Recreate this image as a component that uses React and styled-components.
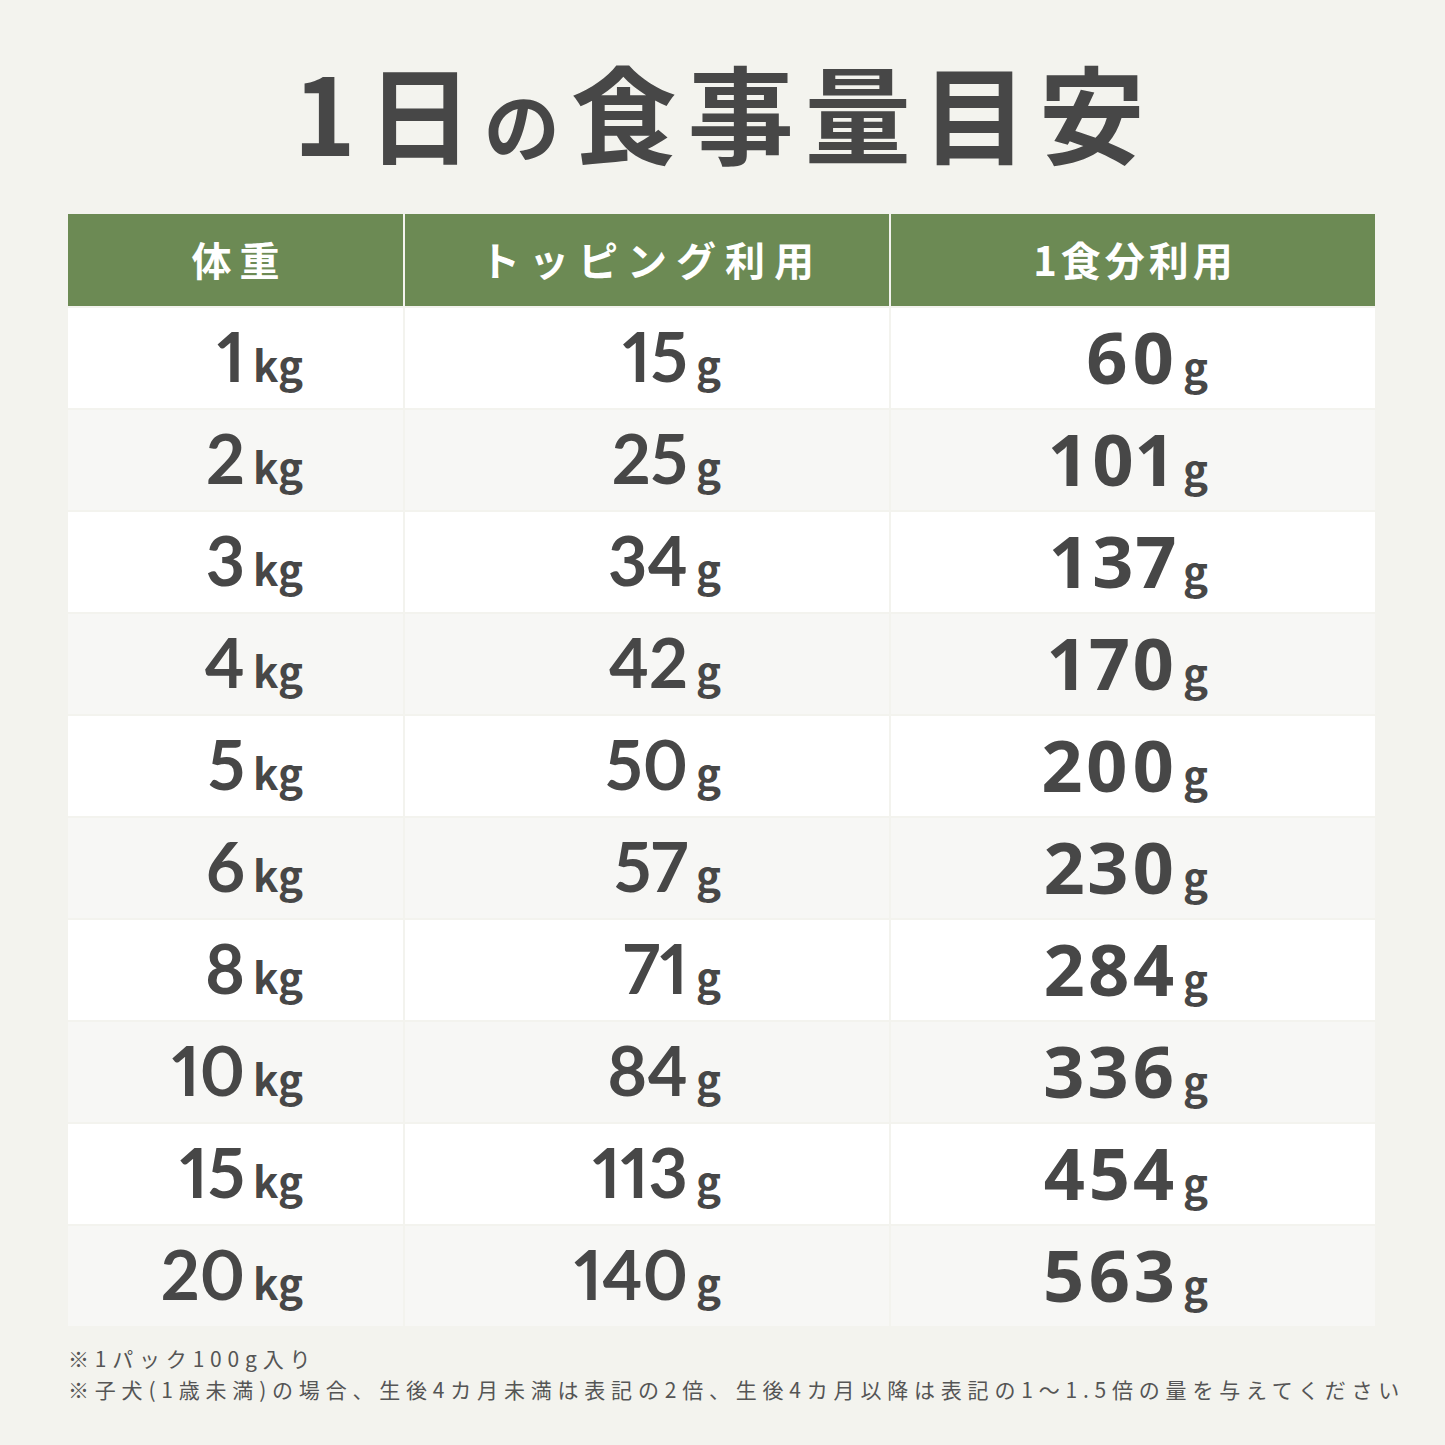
import React from "react";
import styled, { createGlobalStyle } from "styled-components";

const rows = [
  ["1", "15", "60"],
  ["2", "25", "101"],
  ["3", "34", "137"],
  ["4", "42", "170"],
  ["5", "50", "200"],
  ["6", "57", "230"],
  ["8", "71", "284"],
  ["10", "84", "336"],
  ["15", "113", "454"],
  ["20", "140", "563"],
];

const GlobalStyle = createGlobalStyle`
  body {
    margin: 0;
    background: #f3f3ee;
    font-family: "Noto Sans CJK JP", "Noto Sans", sans-serif;
  }
`;

const Page = styled.div`
  width: 1445px;
  min-height: 1445px;
  padding-top: 57px;
  box-sizing: border-box;
  background: #f3f3ee;
  color: #484848;
`;

const Title = styled.h1`
  margin: 0;
  padding-left: 4px;
  text-align: center;
  font-size: 106px;
  line-height: 1;
  font-weight: 700;
  letter-spacing: 11px;
  color: #474747;

  span {
    font-size: 76px;
  }
`;

const Table = styled.div`
  margin: 51px 0 0 68px;
  width: 1307px;
  display: grid;
  grid-template-columns: 335px 484px 484px;
  grid-template-rows: 92px repeat(10, 100px);
  gap: 2px;
`;

const HeadCell = styled.div`
  background: #6c8a54;
  color: #ffffff;
  display: flex;
  align-items: center;
  justify-content: center;
  font-size: 40px;
  font-weight: 700;
  letter-spacing: ${(p) => p.$ls}px;
  padding-left: ${(p) => p.$ls}px;
  padding-bottom: 2px;
`;

const Cell = styled.div`
  background: ${(p) => (p.$alt ? "#f7f7f5" : "#ffffff")};
  display: flex;
  align-items: center;
  justify-content: flex-end;
  padding-right: ${(p) => p.$pr}px;
  padding-bottom: 5px;
  box-sizing: border-box;
`;

const Value = styled.div`
  display: flex;
  align-items: baseline;
  line-height: 1;
  font-weight: 700;
  color: #474747;
`;

/* weight and topping columns use a narrow proportional face,
   the full-meal column a rounder, wider one */
const Num = styled.span`
  font-family: ${(p) =>
    p.$wide ? `"Noto Sans", sans-serif` : `"Lato", sans-serif`};
  font-size: ${(p) => (p.$wide ? 72 : 68)}px;
  letter-spacing: ${(p) => (p.$wide ? 3 : 0)}px;
  font-feature-settings: "pnum" 1;
`;

const Unit = styled.span`
  font-size: 42px;
  margin-left: ${(p) => (p.$wide ? 5 : 8)}px;
`;

const Notes = styled.div`
  margin: 17px 0 0 68px;
  font-size: 21px;
  line-height: 31px;
  letter-spacing: 5.8px;
  color: #555555;
`;

const headers = [
  ["体重", 8],
  ["トッピング利用", 9],
  ["1食分利用", 4],
];

const pads = [100, 168, 167];

export default function App() {
  return (
    <Page>
      <GlobalStyle />
      <Title>
        1日<span>の</span>食事量目安
      </Title>
      <Table>
        {headers.map(([label, ls]) => (
          <HeadCell key={label} $ls={ls}>
            {label}
          </HeadCell>
        ))}
        {rows.map((row, i) =>
          row.map((v, j) => (
            <Cell key={`${i}-${j}`} $alt={i % 2 === 1} $pr={pads[j]}>
              <Value>
                <Num $wide={j === 2}>{v}</Num>
                <Unit $wide={j === 2}>{j === 0 ? "kg" : "g"}</Unit>
              </Value>
            </Cell>
          ))
        )}
      </Table>
      <Notes>
        <div>※1パック100g入り</div>
        <div>
          ※子犬(1歳未満)の場合、生後4カ月未満は表記の2倍、生後4カ月以降は表記の1〜1.5倍の量を与えてください
        </div>
      </Notes>
    </Page>
  );
}
